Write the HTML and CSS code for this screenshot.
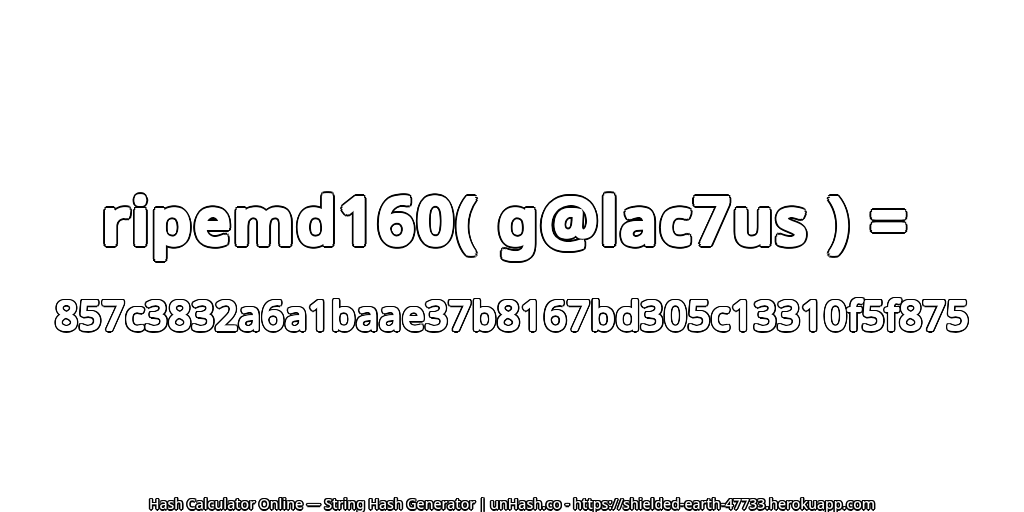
FILE: index.html
```html
<!DOCTYPE html>
<html lang="en">
<head>
<meta charset="utf-8">
<title>unHash</title>
<link rel="stylesheet" href="styles.css">
</head>
<body>
<main class="page">
  <div class="center">
    <h1 class="title">ripemd160( g@lac7us ) =</h1>
    <p class="hash">857c3832a6a1baae37b8167bd305c13310f5f875</p>
  </div>
  <footer class="foot">Hash Calculator Online — String Hash Generator | unHash.co - https://shielded-earth-47733.herokuapp.com</footer>
</main>
</body>
</html>
```
FILE: styles.css
```css
html, body { margin: 0; padding: 0; background: #fff; }
.page {
  width: 1024px; height: 512px; overflow: hidden;
  display: flex; flex-direction: column; align-items: center;
  font-family: "Noto Sans", "Open Sans", sans-serif;
  color: #fff;
}
.center { flex: 1; display: flex; flex-direction: column; align-items: center; padding-top: 180px; }
.title, .hash, .foot { margin: 0; white-space: nowrap; font-weight: 500; will-change: transform; }
.title {
  font-size: 64px; line-height: 80px; letter-spacing: 2.6px; padding-right: 12px;
  text-shadow:
    2.2px 0 #fff, -2.2px 0 #fff, 0 2.2px #fff, 0 -2.2px #fff,
    1.6px 1.6px #fff, -1.6px 1.6px #fff, 1.6px -1.6px #fff, -1.6px -1.6px #fff,
    4px 0 #000, -4px 0 #000, 0 4px #000, 0 -4px #000,
    2.8px 2.8px #000, -2.8px 2.8px #000, 2.8px -2.8px #000, -2.8px -2.8px #000,
    3.7px 1.5px #000, -3.7px 1.5px #000, 3.7px -1.5px #000, -3.7px -1.5px #000,
    1.5px 3.7px #000, -1.5px 3.7px #000, 1.5px -3.7px #000, -1.5px -3.7px #000;
}
.hash {
  font-size: 40px; line-height: 50px; margin-top: 30px; letter-spacing: 0.5px; font-weight: 400;
  text-shadow:
    1px 0 #fff, -1px 0 #fff, 0 1px #fff, 0 -1px #fff,
    0.7px 0.7px #fff, -0.7px 0.7px #fff, 0.7px -0.7px #fff, -0.7px -0.7px #fff,
    2.5px 0 #000, -2.5px 0 #000, 0 2.5px #000, 0 -2.5px #000,
    1.8px 1.8px #000, -1.8px 1.8px #000, 1.8px -1.8px #000, -1.8px -1.8px #000,
    2.3px 1px #000, -2.3px 1px #000, 2.3px -1px #000, -2.3px -1px #000,
    1px 2.3px #000, -1px 2.3px #000, 1px -2.3px #000, -1px -2.3px #000;
}
.foot {
  font-size: 14px; line-height: 16px; letter-spacing: 0.03px;
  text-shadow:
    1.5px 0 #000, -1.5px 0 #000, 0 1.5px #000, 0 -1.5px #000,
    1.1px 1.1px #000, -1.1px 1.1px #000, 1.1px -1.1px #000, -1.1px -1.1px #000;
}
```
